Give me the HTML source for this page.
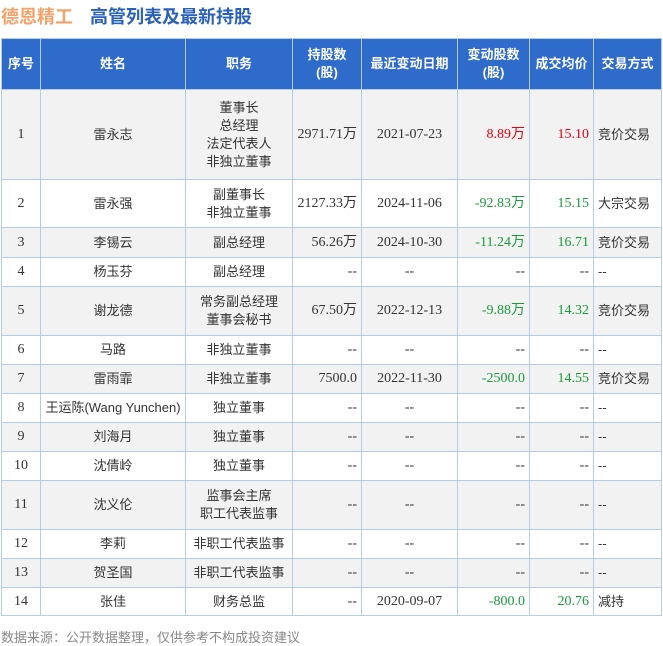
<!DOCTYPE html><html><head><meta charset="utf-8"><style>
body{margin:0;width:663px;height:646px;background:#fff;font-family:"Liberation Sans","Noto Sans CJK SC",sans-serif;color:#333;position:relative;overflow:hidden}
.t1{position:absolute;left:1px;top:3px;font-size:18px;font-weight:bold;color:#f5a26a}
.t2{position:absolute;left:90px;top:3px;font-size:18px;font-weight:bold;color:#2a61b8}
table{position:absolute;left:1px;top:38px;border-collapse:collapse;table-layout:fixed;font-size:13px}
td,th{border:1px solid #b3cce8;padding:0 4px;text-align:center;line-height:18px}
th{background:#2f6bcb;color:#fff;font-weight:bold;border-color:#b3cce8}
tr.s td{background:#f2f2f2}
.n{font-family:"Liberation Serif","Noto Sans CJK SC",serif;font-size:14px}
.r{text-align:right}.l{text-align:left}
.red{color:#e60012}.g{color:#1a9a3c}
.foot{position:absolute;left:1px;top:627px;font-size:13px;color:#888}
</style></head><body>
<div class="t1">德恩精工</div><div class="t2">高管列表及最新持股</div>
<table>
<colgroup><col style="width:39px"><col style="width:145px"><col style="width:107px"><col style="width:69px"><col style="width:96px"><col style="width:72px"><col style="width:64px"><col style="width:68px"></colgroup>
<tr style="height:51px"><th>序号</th><th>姓名</th><th>职务</th><th>持股数<br>(股)</th><th>最近变动日期</th><th>变动股数<br>(股)</th><th>成交均价</th><th>交易方式</th></tr>
<tr class="s" style="height:90px"><td class="n">1</td><td>雷永志</td><td>董事长<br>总经理<br>法定代表人<br>非独立董事</td><td class="n r">2971.71万</td><td class="n">2021-07-23</td><td class="n r red">8.89万</td><td class="n r red">15.10</td><td class="l">竞价交易</td></tr>
<tr style="height:48px"><td class="n">2</td><td>雷永强</td><td>副董事长<br>非独立董事</td><td class="n r">2127.33万</td><td class="n">2024-11-06</td><td class="n r g">-92.83万</td><td class="n r g">15.15</td><td class="l">大宗交易</td></tr>
<tr class="s" style="height:30px"><td class="n">3</td><td>李锡云</td><td>副总经理</td><td class="n r">56.26万</td><td class="n">2024-10-30</td><td class="n r g">-11.24万</td><td class="n r g">16.71</td><td class="l">竞价交易</td></tr>
<tr style="height:29px"><td class="n">4</td><td>杨玉芬</td><td>副总经理</td><td class="n r">--</td><td class="n">--</td><td class="n r">--</td><td class="n r">--</td><td class="l">--</td></tr>
<tr class="s" style="height:49px"><td class="n">5</td><td>谢龙德</td><td>常务副总经理<br>董事会秘书</td><td class="n r">67.50万</td><td class="n">2022-12-13</td><td class="n r g">-9.88万</td><td class="n r g">14.32</td><td class="l">竞价交易</td></tr>
<tr style="height:29px"><td class="n">6</td><td>马路</td><td>非独立董事</td><td class="n r">--</td><td class="n">--</td><td class="n r">--</td><td class="n r">--</td><td class="l">--</td></tr>
<tr class="s" style="height:29px"><td class="n">7</td><td>雷雨霏</td><td>非独立董事</td><td class="n r">7500.0</td><td class="n">2022-11-30</td><td class="n r g">-2500.0</td><td class="n r g">14.55</td><td class="l">竞价交易</td></tr>
<tr style="height:29px"><td class="n">8</td><td>王运陈(Wang Yunchen)</td><td>独立董事</td><td class="n r">--</td><td class="n">--</td><td class="n r">--</td><td class="n r">--</td><td class="l">--</td></tr>
<tr class="s" style="height:29px"><td class="n">9</td><td>刘海月</td><td>独立董事</td><td class="n r">--</td><td class="n">--</td><td class="n r">--</td><td class="n r">--</td><td class="l">--</td></tr>
<tr style="height:29px"><td class="n">10</td><td>沈倩岭</td><td>独立董事</td><td class="n r">--</td><td class="n">--</td><td class="n r">--</td><td class="n r">--</td><td class="l">--</td></tr>
<tr class="s" style="height:49px"><td class="n">11</td><td>沈义伦</td><td>监事会主席<br>职工代表监事</td><td class="n r">--</td><td class="n">--</td><td class="n r">--</td><td class="n r">--</td><td class="l">--</td></tr>
<tr style="height:29px"><td class="n">12</td><td>李莉</td><td>非职工代表监事</td><td class="n r">--</td><td class="n">--</td><td class="n r">--</td><td class="n r">--</td><td class="l">--</td></tr>
<tr class="s" style="height:29px"><td class="n">13</td><td>贺圣国</td><td>非职工代表监事</td><td class="n r">--</td><td class="n">--</td><td class="n r">--</td><td class="n r">--</td><td class="l">--</td></tr>
<tr style="height:28px"><td class="n">14</td><td>张佳</td><td>财务总监</td><td class="n r">--</td><td class="n">2020-09-07</td><td class="n r g">-800.0</td><td class="n r g">20.76</td><td class="l">减持</td></tr>
</table>
<div class="foot">数据来源：公开数据整理，仅供参考不构成投资建议</div>
</body></html>
